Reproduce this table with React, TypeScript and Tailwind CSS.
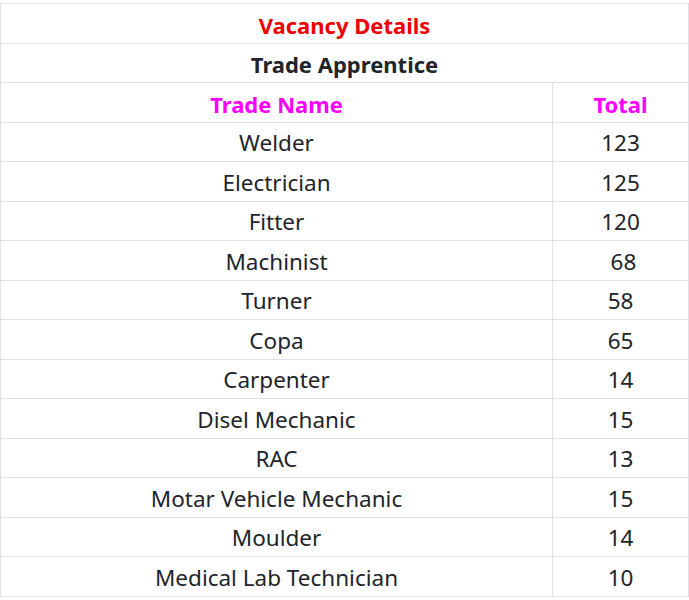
const ROWS: [string, string][] = [
  ["Welder", "123"],
  ["Electrician", "125"],
  ["Fitter", "120"],
  ["Machinist", "\u00a068"],
  ["Turner", "58"],
  ["Copa", "65"],
  ["Carpenter", "14"],
  ["Disel Mechanic", "15"],
  ["RAC", "13"],
  ["Motar Vehicle Mechanic", "15"],
  ["Moulder", "14"],
  ["Medical Lab Technician", "10"],
]

export default function App() {
  return (
    <div className="pt-[3px] bg-white min-h-screen" style={{ fontFamily: '"Noto Sans", "Open Sans", sans-serif' }}>
      <table className="w-[689px] border-collapse text-[#212529] text-[22.5px] table-fixed">
        <colgroup>
          <col className="w-[552px]" />
          <col />
        </colgroup>
        <tbody>
          <tr className="h-[39.5px]">
            <td colSpan={2} className="border border-[#dee2e6] text-center font-bold text-[22px] text-[#ee0000] px-0 pb-0 pt-[3px] leading-none">
              Vacancy Details
            </td>
          </tr>
          <tr className="h-[39.5px]">
            <td colSpan={2} className="border border-[#dee2e6] text-center font-bold text-[22px] px-0 pb-0 pt-[3px] leading-none">
              Trade Apprentice
            </td>
          </tr>
          <tr className="h-[39.5px]">
            <td className="border border-[#dee2e6] text-center font-bold text-[22px] text-[#ff00ff] px-0 pb-0 pt-[3px] leading-none">Trade Name</td>
            <td className="border border-[#dee2e6] text-center font-bold text-[22px] text-[#ff00ff] px-0 pb-0 pt-[3px] leading-none">Total</td>
          </tr>
          {ROWS.map(([name, total]) => (
            <tr key={name} className="h-[39.5px]">
              <td className="border border-[#dee2e6] text-center px-0 pb-0 pt-[3px] leading-none">{name}</td>
              <td className="border border-[#dee2e6] text-center px-0 pb-0 pt-[3px] leading-none">{total}</td>
            </tr>
          ))}
        </tbody>
      </table>
    </div>
  )
}
